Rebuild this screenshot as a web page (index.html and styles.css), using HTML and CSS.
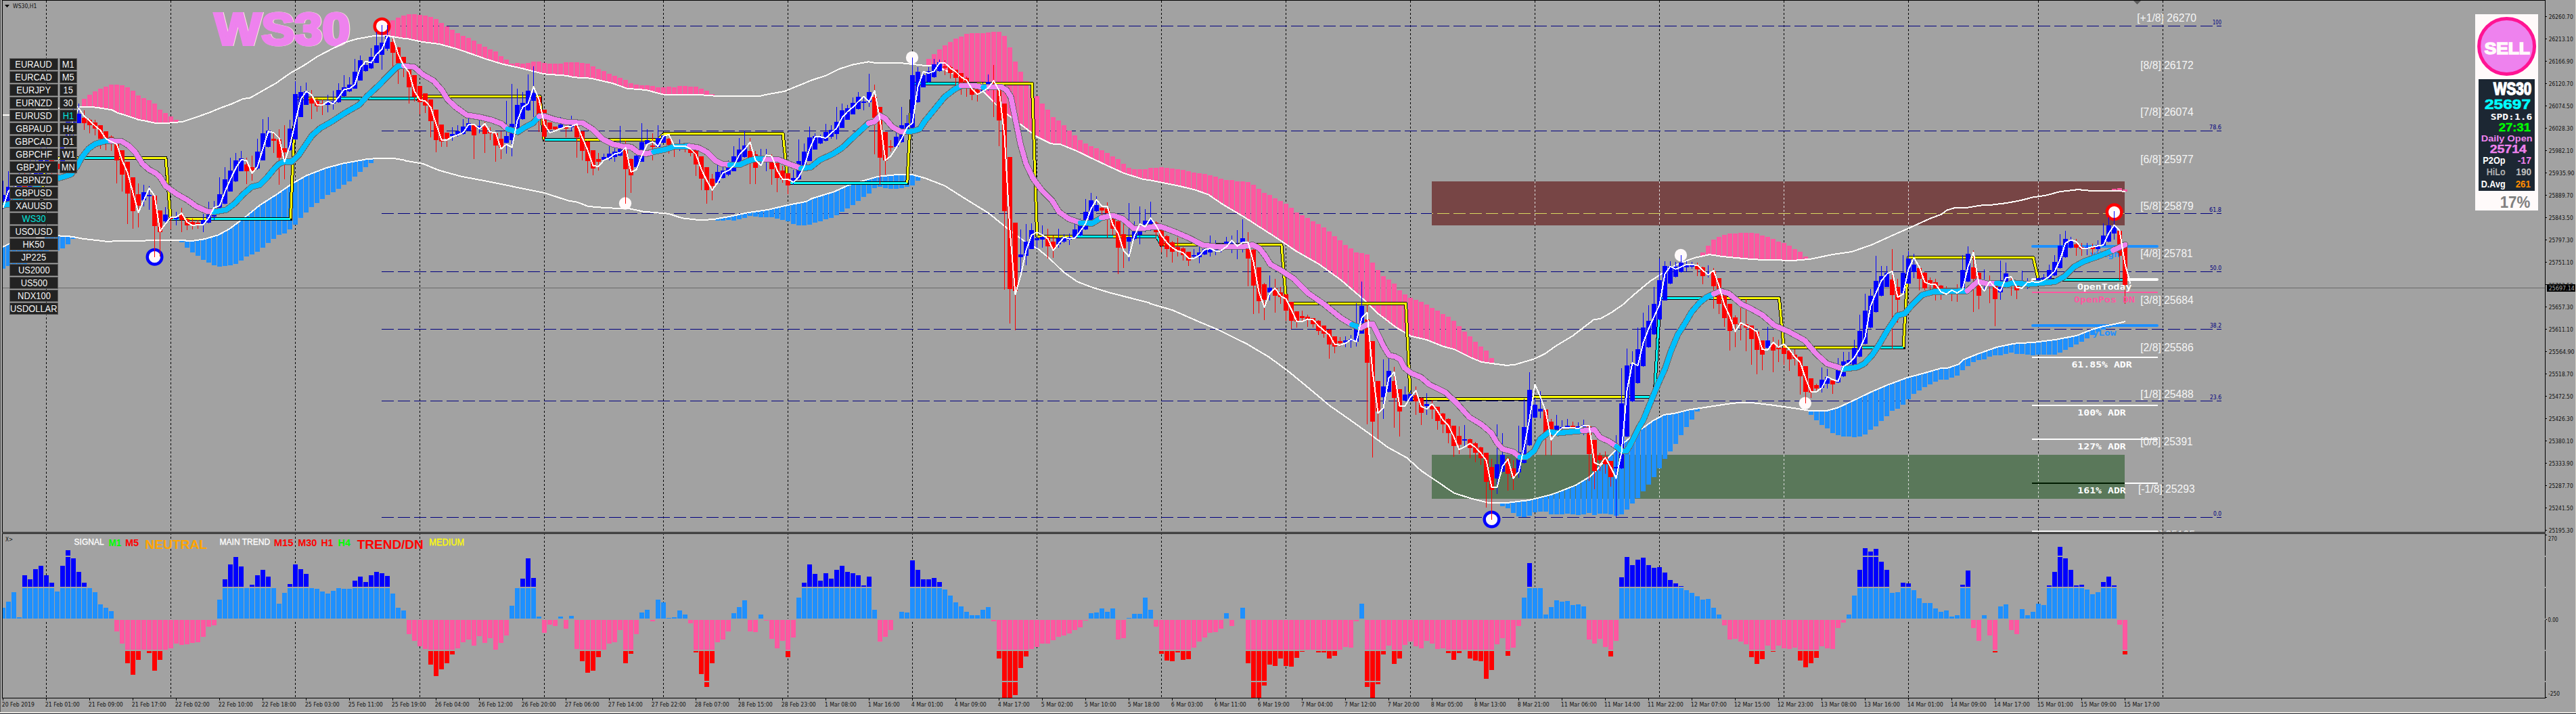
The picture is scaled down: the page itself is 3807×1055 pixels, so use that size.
FILE: index.html
```html
<!DOCTYPE html>
<html lang="en">
<head>
<meta charset="utf-8">
<title>WS30,H1</title>
<link rel="stylesheet" href="styles.css">
</head>
<body>
<main class="terminal">
  <svg class="chart" id="chart" width="3807" height="1055" viewBox="0 0 3807 1055"></svg>
  <nav class="switcher">
    <div class="switcher-col symbols" id="symbols"></div>
    <div class="switcher-col frames" id="frames"></div>
  </nav>
</main>
<script src="chart.js"></script>
</body>
</html>
```
FILE: styles.css
```css
body { margin: 0; background: #a2a2a2; font-family: "Liberation Sans", sans-serif; }
.terminal { position: relative; width: 3807px; height: 1055px; overflow: hidden; background: #a2a2a2; }
.chart { display: block; }
.switcher { position: absolute; left: 14px; top: 86px; display: flex; gap: 2px; align-items: flex-start; }
.switcher-col { display: flex; flex-direction: column; gap: 1px; }
.key { box-sizing: border-box; height: 18px; border: 1px solid #5c5c5c; background: #222; color: #f4f4f4; font-size: 14px; line-height: 17px; display: flex; justify-content: center; white-space: nowrap; }
.key span { transform: scaleX(.92); }
.symbols .key { width: 72px; }
.frames .key { width: 26px; }
.key.on { color: #00e5dc; }

.crisp { shape-rendering: crispEdges; }
.up { fill: #00f; }
.down { fill: #f00; }
.pink { fill: #ff57a0; }
.sky { fill: #1e90ff; }
.level { fill: #a2a2a2; }
.line { fill: none; stroke-linejoin: round; }
.band { stroke: #fffdfa; stroke-width: 2; }
.fast { stroke: #fff; stroke-width: 2; }
.ma-edge { stroke: #6b6b6b; stroke-width: 9.5; stroke-linecap: round; }
.ma { stroke-width: 7.4; stroke-linecap: round; }
.day-edge { stroke: #000; stroke-width: 5; stroke-linecap: square; }
.day { stroke-width: 3; }
.s-blue { stroke: #00bfff; }
.s-pink { stroke: #ee82ee; }
.s-yellow { stroke: #ff0; }
.s-cyan { stroke: #0ff; }
.grid { stroke: #000; stroke-dasharray: 3 3; }
.grid-light { stroke: #ddd; stroke-dasharray: 3 3; }
.fib { stroke: #000080; stroke-dasharray: 18 6; }
.fib-zone { stroke: #d8d860; stroke-dasharray: 18 6; }
.mono { font-family: "DejaVu Sans Mono", monospace; font-weight: bold; }
.sans { font-family: "Liberation Sans", sans-serif; }
.bold { font-weight: bold; }
.cond { font-family: "DejaVu Sans Condensed", "DejaVu Sans", sans-serif; }
```
FILE: chart.js
```javascript
const svg = document.getElementById('chart');
const NS = 'http://www.w3.org/2000/svg';
function el(name, attrs, text) {
  const n = document.createElementNS(NS, name);
  for (const k in attrs) n.setAttribute(k, attrs[k]);
  if (text !== undefined) n.textContent = text;
  svg.appendChild(n);
  return n;
}
const rect = (x, y, w, h, cls, fill) => el('rect', Object.assign({ x, y, width: w, height: h, class: 'crisp ' + (cls || '') }, fill ? { fill } : {}));
const seg = (x1, y1, x2, y2, cls, stroke, w) => el('line', Object.assign({ x1, y1, x2, y2, class: 'crisp ' + cls }, stroke ? { stroke, 'stroke-width': w || 1 } : {}));
// text fitted between x1 and x2 on a baseline
const txt = (s, x1, x2, y, size, fill, cls, extra) => el('text', Object.assign({ x: x1, y, style: 'font-size:' + size + 'px', fill, textLength: (x2 - x1).toFixed(1), lengthAdjust: 'spacingAndGlyphs', class: cls || 'sans' }, extra || {}), s);
const barX = i => 4.5 + 8 * i;

// Chart sections: origin x, origin y, units per pixel in x and y
const S = { A: [0, 0, 2.45, 3], B: [600, 0, 2.45, 3], C: [1200, 0, 2.45, 3], D: [1700, 240, 2.45, 2.851], E: [2300, 240, 2.45, 2.851], F: [2880, 0, 2.8, 1.96] };
const toX = (s, x) => S[s][0] + x / S[s][2];
const toY = (s, y) => S[s][1] + y / S[s][3];
function pts(spec) {
  const out = [];
  for (const [s, list] of spec) for (const p of list.trim().split(/\s+/)) {
    const [x, y] = p.split(',').map(Number);
    out.push([toX(s, x), toY(s, y)]);
  }
  return out;
}
const poly = (p, cls) => el('polyline', { points: p.map(q => q[0].toFixed(1) + ',' + q[1].toFixed(1)).join(' '), class: 'line ' + cls });

const upper = pts([
 ['A', '0,510 35,510 145,484 290,473 330,473 370,480 405,487 425,500 465,515 500,530 530,537 560,545 610,545 660,540 710,520 760,498 800,478 840,460 880,438 905,434 950,403 1000,368 1050,325 1100,290 1150,250 1200,218 1250,188 1290,173 1350,160 1410,160 1465,171'],
 ['B', '0,170 60,186 120,195 180,215 240,240 290,262 350,284 420,303 500,328 580,335 610,343 670,347 750,370 800,392 870,399 935,420 1060,420 1130,426 1280,426 1310,418 1370,405 1450,365'],
 ['C', '0,355 50,335 100,305 150,286 205,274 230,279 320,279 410,291 440,291 475,308 520,330 590,385 625,410 665,462 710,510 760,555 810,603 865,637 900,640 960,670 1010,700 1080,740 1130,768 1200,795'],
 ['D', '0,75 100,98 160,115 210,135 260,175 340,230 440,305 530,375 610,428 690,495 770,575 825,637 890,695 945,732 1000,747 1060,775 1100,787 1160,822 1200,841 1290,855 1320,852 1390,828 1430,805 1460,780'],
 ['E', '0,772 60,730 135,663 160,658 200,632 240,600 280,558 340,500 400,455 440,428 500,402 555,388 600,396 680,405 740,410 860,413 920,407 1000,388 1070,376 1140,348 1210,311 1280,275 1350,238 1395,218 1415,200'],
 ['F', '0,607 30,601 80,601 130,595 180,593 240,588 300,580 350,571 400,566 460,555 535,549 580,552 660,552 730,554']]);
const lower = pts([
 ['A', '0,1100 35,1080 145,1054 212,1045 260,1049 300,1058 385,1070 500,1067 600,1065 700,1067 740,1060 790,1042 830,1015 890,960 940,910 1000,863 1060,812 1110,778 1180,745 1240,725 1330,705 1380,701 1430,703 1465,710'],
 ['B', '0,713 60,725 120,755 200,782 300,805 400,830 500,855 590,890 620,896 660,915 730,922 810,925 860,938 950,947 1000,967 1060,975 1110,973 1170,960 1240,942 1310,930 1380,910 1450,893'],
 ['C', '0,880 80,850 130,822 180,803 240,782 310,774 365,775 410,790 480,823 560,885 640,945 710,1015 770,1070 820,1105 860,1145 910,1205 960,1248 1010,1272 1080,1298 1150,1320 1220,1342'],
 ['D', '0,595 80,622 170,668 250,707 350,765 430,820 500,880 570,947 650,1025 720,1082 790,1140 860,1200 930,1245 980,1298 1040,1345 1100,1393 1160,1415 1220,1433 1290,1434 1370,1423 1450,1400'],
 ['E', '0,1392 70,1360 120,1325 160,1278 200,1230 240,1185 300,1130 350,1088 390,1063 430,1057 480,1042 560,1028 640,1014 700,1011 780,1022 870,1037 910,1045 980,1046 1020,1033 1090,995 1140,967 1200,937 1270,907 1340,885 1390,868 1415,866'],
 ['F', '0,1065 40,1055 60,1042 120,1025 200,1005 270,995 360,991 440,984 530,972 590,955 640,945 690,938 730,931']]);
function at(line, x) {
  for (let k = 1; k < line.length; k++) if (line[k][0] >= x) {
    const a = line[k - 1], b = line[k];
    return a[1] + (b[1] - a[1]) * (x - a[0]) / (b[0] - a[0] || 1);
  }
  return line[line.length - 1][1];
}
const pinkTips = [
 ['A', 15, '438 421 405 393 384 375 375 378 387 402 423 434 444 459 486 501 516 531'],
 ['A', 71, '130 90 78 68'],
 ['B', 75, '63 63 66 69 75 84 101 117 132 147 158 168 180 195 207 219 228 249 264 282 279 282 279 273 273 279 282 282 282 276 276 276 279 282 294 306 315 327 336 345 354 369 375 378 378 381 387 387 384 387 381 381 384 384 393 402 417'],
 ['C', 170, '287 261 240 219 201 186 171 162 150 147 147 147 144 141 141 159 210 273 318 360 392 426 459 486 519 534 555 579 600 621 636 648 657 666 678 693 705 726 744 750 750 750 744 744 741 744 747 750 753 759 765 768 771 777 783'],
 ['D', 225, '68 74 74 80 80 83 94 111 128 137 151 163 174 191 211 222 234 248 259 274 291 311 328 348 362 379 382 388 422 453 479 493 510 539 556 570 579 587 599 613 624 639 650 667 690 713 733 755 775 793 824 847'],
 ['E', 314, '379 351 325 314 305 299 299 296 296 296 299 308 314 322 334 339 351 365 376 396'],
 ['F', 390, '547 545 549']];
const skyTips = [
 ['A', 0, '1190 1178 1172 1170 1168 1150 1140 1130 1120 1112 1108 1101 1083 1058'],
 ['A', 33, '1076 1098 1118 1133 1152 1166 1175 1182 1179 1176 1170 1155 1137 1128 1116 1098 1077 1059 1041 1035 1017 996 966 942 918 900 882 864 852 837 819 804 783 762 741 723'],
 ['B', 132, '977 977 977 977 972 968 957 960 963 963 963 968 975 981 993 999 999 996 987'],
 ['C', 151, '981 972 966 954 939 924 909 891 873 858 834 828 834 837 837 834 828 822 801'],
 ['D', 277, '1447 1457 1477 1491 1494 1488 1474 1471 1471 1482 1482 1482 1480 1482 1485'],
 ['E', 292, '1482 1477 1485 1480 1480 1482 1488 1482 1463 1437 1414 1386 1357 1326 1291 1249 1217 1186 1149 1115 1083 1049'],
 ['E', 334, '1061 1086 1106 1120 1138 1149 1152 1155 1157 1155 1146 1126 1112 1089 1069 1046 1038 1021 998 975 961 947 935 924 915 915'],
 ['F', 360, '1094 1088 1074 1060 1047 1043 1039 1033 1029 1028 1025 1023 1025 1025 1028 1028 1028 1028 1028 1027 1021 1013 1004 998 990 980 970 962 955 948']];

// Candles: u/d, then high, body top, body bottom, low
const candles = [
 ['A', 0, 'u800,863,925,928 u760,828,895,900 u800,830,880,890 u760,790,860,880 d740,800,850,870 u700,770,840,870 u690,740,800,820 u650,710,780,800 u640,690,750,790 d660,700,740,780 d690,725,750,790 u600,650,740,750 u500,530,640,650 u480,510,545,600 u460,503,545,545 d490,521,545,575 d525,530,555,590 d530,542,570,600 d555,555,615,660 d582,582,620,665 d600,606,638,670 d640,640,710,812 d666,666,773,850 d717,717,857,992 d786,786,935,1013 d812,860,912,1007 u820,852,888,915 u825,864,868,930 d868,868,1001,1140 d933,933,1028,1138 u918,950,980,990 d958,966,972,1018 u940,962,972,998 d921,950,976,1028 d965,972,998,1020 d970,984,998,1018 d975,986,992,1015 u948,976,992,1028 u895,940,986,990 u892,945,960,974 u787,860,920,920 u740,796,902,905 u700,756,848,850 u678,711,804,806 u668,702,758,760 d700,729,758,815 d690,741,756,802 u615,672,748,752 u528,592,710,712 u520,580,652,655 d592,614,624,678 d573,618,698,818 d556,657,674,795 u530,570,665,668 u360,418,617,620 u380,408,518,520 u366,405,464,466 d400,434,459,527 d434,447,472,494 d440,458,465,510 u420,454,464,497 u402,450,460,486 u368,399,452,455 u333,387,425,430 u342,376,406,408 u262,318,392,394 u245,267,356,358 u270,288,315,318 u212,252,303,305 u142,201,278,280 u112,189,243,308 u112,158,215,225 d165,186,233,298 d208,210,278,372 d252,252,305,342'],
 ['B', 75, 'd280,305,386,458 d333,333,430,450 d381,381,453,506 d414,414,468,500 d441,441,537,608 d486,486,620,674 d552,552,627,650 d588,588,615,650 u565,594,603,624 u555,583,600,605 u529,561,594,596 u524,545,580,582 d552,555,599,705 u533,558,569,592 d540,560,594,678 d565,585,592,622 d585,590,644,716 d582,615,654,705 u448,603,632,680 u372,549,620,692 u394,465,575,577 u408,457,528,530 u330,402,490,492 u294,410,447,518 d430,430,510,584 d486,486,605,628 d542,543,572,577 d560,561,572,575 u520,551,567,570 d555,560,570,608 u514,555,565,580 d550,553,609,698 d580,582,668,712 d624,626,713,768 d666,666,747,776 d678,705,717,755 u680,697,708,712 u648,681,705,710 u645,672,695,716 u558,660,690,692 d625,660,749,902 d702,705,776,855 u670,690,740,742 u546,630,716,718 u573,621,640,645 d592,645,651,710 u556,612,650,652 u598,600,632,634 d612,615,642,680 d640,648,660,695 u618,652,655,670 d645,658,664,676 d650,660,678,692 d660,666,728,780 d693,693,792,842 d741,741,842,902 d771,792,824,888 u732,762,810,812 u738,756,789,792 u712,740,774,780 u648,693,758,760 u612,663,718,722 u580,645,696,698 d613,669,702,815 d670,684,743,815 u660,700,704,730 u660,695,710,758 d684,692,749,820 d722,722,788,851 d735,756,794,810 d768,768,821,860 u752,789,804,820 u618,714,794,797 u636,672,740,742 u560,609,713,715 u590,603,662,664'],
 ['C', 151, 'u598,606,635,638 u549,585,624,626 u555,576,605,615 u474,540,594,618 u459,489,566,568 u465,480,530,532 u432,456,506,508 u408,429,482,485 u428,450,456,488 u327,408,453,474 d375,429,521,684 d474,474,698,818 d585,585,710,773 d620,648,654,672 u560,606,650,652 u474,555,630,632 u510,546,572,575 u254,333,566,568 u297,318,453,455 u318,333,386,388 u297,315,363,365 u262,285,342,344 u264,276,315,318 d267,293,300,333 d290,297,323,348 d309,309,345,380 d324,324,370,420 d340,346,375,430 d370,380,420,444 d385,390,418,450 u366,385,405,408 u330,363,390,402 d288,370,380,518 d395,396,533,648 d459,459,935,1283 d696,696,1280,1433 d987,987,1290,1463 u1018,1128,1140,1213 u994,1070,1133,1175 u990,1020,1103,1105 u1040,1055,1064,1100 u1000,1050,1062,1098 d1015,1050,1091,1145 d1043,1070,1100,1143 u1015,1055,1084,1098 u1038,1050,1072,1076 u1034,1050,1062,1085 u988,1018,1055,1060 u970,1000,1044,1046 u882,939,1018,1020 u855,888,975,978 u870,909,936,938 d912,921,933,958 d898,924,945,1052 d960,965,1014,1040 d975,980,1098,1214 d990,1038,1102,1188 u900,1050,1070,1158 u980,1024,1060,1064 u915,1020,1040,1083 u927,978,1010,1030 u894,975,1000,1022 d980,988,1030,1060 d1015,1020,1088,1120 d1040,1047,1104,1140 d1068,1074,1115,1163 d1052,1095,1110,1138 d1095,1100,1132,1155 d1115,1116,1155,1178 u1104,1131,1137,1150 u1090,1119,1140,1166 u1095,1105,1128,1132 u1044,1100,1118,1138 u1066,1098,1110,1132'],
 ['D', 225, 'u340,365,370,378 u314,334,345,347 u308,340,348,382 u285,345,350,408 u239,319,335,378 d294,345,405,522 d366,368,518,639 d442,442,584,635 d508,514,580,664 u476,527,547,582 d490,530,561,632 d524,547,567,595 d556,556,624,668 d587,587,667,700 d626,627,669,697 d623,647,655,667 d642,650,662,693 d655,657,681,697 d665,667,710,727 d686,687,721,737 d702,703,767,826 d733,733,775,803 d735,752,760,775 u733,749,758,778 u728,743,752,780 u593,690,755,775 u502,603,720,722 d600,661,843,1103 d752,753,1091,1243 d921,921,1050,1165 u830,944,989,1080 u828,878,966,968 d861,921,992,1118 d955,955,1049,1155 u944,978,1004,1006 u960,975,1003,1005 d944,982,1006,1063 d990,992,1055,1105 u972,1018,1026,1063 d1000,1020,1041,1080 d1028,1029,1088,1125 d1056,1058,1103,1140 d1078,1080,1140,1183 d1108,1109,1195,1240 d1112,1152,1189,1228 u1106,1166,1171,1200 d1163,1166,1203,1245 d1177,1183,1223,1263 d1198,1200,1246,1274 d1223,1223,1346,1454 d1249,1283,1380,1504 u1103,1272,1331,1397 u1140,1232,1303,1305 d1240,1250,1311,1383 d1255,1289,1325,1380 u1109,1220,1306,1328 u995,1115,1266,1268 u884,958,1192,1194 u990,1021,1075,1077 u964,1038,1049,1078 d1040,1041,1137,1234 d1080,1092,1140,1234 u1063,1109,1128,1130 u1085,1115,1120,1122 u1080,1109,1118,1120 d1092,1110,1118,1120 u1095,1113,1118,1120'],
 ['E', 292, 'u1083,1105,1115,1150 d1108,1112,1229,1343 d1169,1169,1300,1377 d1223,1234,1254,1300 d1217,1240,1271,1311 d1257,1257,1326,1366 u1149,1283,1290,1494 u867,1015,1289,1291 u784,855,1155,1157 u795,850,1006,1008 u696,787,929,931 u633,696,858,860 u602,667,778,780 u525,596,724,726 u405,496,661,663 u416,436,581,583 u416,440,510,512 u420,438,482,484 u390,422,462,464 u416,432,443,460 u418,431,440,447 d422,434,450,479 d440,442,479,513 u433,465,470,485 d445,460,522,615 d488,488,596,640 d555,556,656,692 d596,596,710,793 d645,654,682,778 d613,678,685,750 d576,680,697,795 d686,687,744,852 d712,713,790,892 d750,750,809,875 u693,750,782,784 d736,765,793,884 d747,781,787,841 d770,781,807,853 d793,794,830,878 d787,810,828,855 d818,818,901,978 d858,858,966,1015 d909,909,969,992 d932,938,952,960 u864,915,949,969 u870,905,932,952 d912,918,935,975 u824,875,927,929 u798,838,901,903 u798,832,850,852 u747,781,852,854 u641,710,818,820 u553,624,764,766 u533,562,696,698 u393,499,630,632 u436,479,563,565 u436,465,524,526 d365,493,559,787 d490,525,579,675 u390,465,550,552 u373,405,510,512 u385,430,462,488 d430,445,490,538 d463,465,529,538 d485,496,512,535 d490,505,535,582 d515,519,559,578 d522,540,548,560 d530,536,544,585 d513,540,552,587 u390,453,545,547 u354,385,502,504 d372,442,490,630 d462,465,562,619 u450,505,510,540'],
 ['F', 367, 'd798,825,832,878 d815,822,867,944 u755,811,846,868 u760,792,815,818 d805,818,825,857 d825,830,840,866 u784,820,825,834 u806,818,822,837 d812,815,818,822 u803,806,812,818 u794,803,810,812 u766,782,807,810 u739,759,797,799 u678,711,777,779 u668,692,745,747 u686,696,718,720 d692,708,717,741 d704,715,722,741 u704,716,720,738 d705,715,722,736 u696,710,722,727 u647,682,712,714 u630,653,700,702 u612,655,676,694 d666,668,741,811 d703,710,826,880']];
const fast = [
 ['A', 0, '920 845 840 800 820 780 760 730 700 700 710 690 600 530 480 515 535 558 578 615 628 640 710 765 855 942 888 835 868 1025 992 962 962 945 985 1000 996 996 965 920 912 850 795 745 708 712 768 738 660 583 588 612 718 645 540 440 405 420 464 466 450 460 430 397 393 374 300 272 278 240 218 160 162 240 290'],
 ['B', 75, '320 405 442 448 475 550 621 620 607 598 588 553 552 570 548 586 588 660 640 653 535 475 460 385 440 552 588 580 570 561 560 550 610 665 735 738 710 700 682 678 654 763 752 690 640 628 649 603 596 648 649 648 660 684 750 800 842 810 766 756 735 687 662 630 710 733 688 692 755 794 795 807 785 738 660 606'],
 ['C', 151, '607 612 590 568 522 495 475 450 428 452 402 530 710 692 655 615 565 545 385 318 324 316 278 279 302 318 342 355 395 418 405 390 358 400 600 1020 1305 1220 1110 1042 1030 1042 1058 1110 1080 1052 1058 1055 1025 990 925 885 914 916 995 1035 1110 1138 1045 993 1005 967 1000 1045 1075 1098 1112 1120 1145 1145 1132 1106 1102 1112'],
 ['D', 225, '372 355 328 352 337 337 420 545 610 552 530 562 575 620 670 670 660 663 688 708 726 767 769 762 745 755 655 632 880 1056 1035 908 883 1026 1026 988 962 1028 1038 1018 1048 1085 1108 1155 1210 1198 1184 1200 1225 1255 1368 1368 1280 1250 1330 1303 1200 1080 935 988 1050 1168 1140 1118 1119 1117 1122'],
 ['E', 292, '1108 1109 1265 1275 1243 1285 1330 1220 960 845 856 760 700 650 600 470 438 450 440 430 431 433 455 473 455 520 600 650 712 676 687 698 713 788 789 758 778 765 788 820 843 910 967 966 950 903 915 922 860 845 822 785 735 605 550 498 470 458 568 555 450 402 440 505 512 514 545 555 538 550 535 440 378 510 542'],
 ['F', 367, '815 832 843 804 802 832 835 817 816 818 811 801 786 752 704 695 700 719 719 715 712 710 675 652 668 765 822']];
const ma = [
 ['s-blue', [['A', '0,912 35,905 100,860 150,810 212,790 235,782 258,772 280,735 295,700 320,660 345,638 375,627 400,624']]],
 ['s-pink', [['A', '400,624 440,626 465,645 490,675 515,725 540,752 565,768 580,785 600,825 640,860 680,888 710,915 750,937 775,940']]],
 ['s-blue', [['A', '775,940 795,935 820,930 850,902 880,862 912,828 940,820 965,790 990,752 1010,727 1030,716 1055,718 1080,690 1105,645 1130,600 1160,568 1200,540 1250,500 1300,465 1330,425 1370,380 1410,330 1440,294 1462,292']]],
 ['s-pink', [['A', '1462,292'], ['B', '30,297 60,330 100,358 130,400 150,440 180,475 220,510 270,520 310,532 345,548 368,572']]],
 ['s-blue', [['B', '368,572 405,585 430,565 460,545 482,516']]],
 ['s-pink', [['B', '482,516 500,514 540,530 580,541 640,545 675,572 710,615 750,640 790,650 815,652 840,675 870,682 897,673']]],
 ['s-blue', [['B', '897,673 940,662 970,650 1025,648']]],
 ['s-pink', [['B', '1025,648 1060,655 1090,675 1120,712 1145,727 1172,730']]],
 ['s-blue', [['B', '1172,730 1210,730 1240,713 1270,703 1300,706']]],
 ['s-pink', [['B', '1300,706 1345,706 1390,728 1430,746']]],
 ['s-blue', [['B', '1430,746 1465,742'], ['C', '30,708 75,683 110,655 150,608 180,574 205,546']]],
 ['s-pink', [['C', '205,546 225,540 248,513 265,525 290,562 320,583 348,584']]],
 ['s-blue', [['C', '348,584 370,580 390,572 410,535 440,490 480,430 515,397 540,380']]],
 ['s-pink', [['C', '540,380 590,380 620,387']]],
 ['s-blue', [['C', '620,387 640,385']]],
 ['s-pink', [['C', '640,385 685,385 705,400 720,430 735,520 755,640 775,725 800,790 830,840 870,890 895,940 930,970 972,988']]],
 ['s-blue', [['C', '972,988 1015,990 1048,965']]],
 ['s-pink', [['C', '1048,965 1090,955 1125,970 1165,1013 1200,1012'], ['D', '10,271 40,271 90,293 140,318 190,348 250,356 340,354 370,347 395,362 415,392 435,430 470,452 520,490 570,550 630,598 690,655 730,683']]],
 ['s-blue', [['D', '730,683 762,697']]],
 ['s-pink', [['D', '762,697 785,683 805,680 820,715 845,775 865,813 885,817 905,830 920,865 945,888 980,905 1010,935 1070,970 1110,1015 1155,1073 1200,1105 1235,1140 1255,1180 1275,1207 1315,1220 1338,1242']]],
 ['s-blue', [['D', '1338,1242 1362,1242 1390,1215 1412,1165 1445,1135 1475,1140'], ['E', '40,1136 95,1130']]],
 ['s-pink', [['E', '95,1130 138,1126 158,1158 190,1175 218,1197']]],
 ['s-blue', [['E', '218,1197 238,1216 255,1215 272,1180 300,1115 315,1085 345,1000 370,930 395,865 415,795 440,725 465,680 490,630 520,590 545,567 570,554']]],
 ['s-pink', [['E', '570,554 595,542 625,552 670,597 700,613 745,642 790,687 840,712 900,750 940,805 980,848 1040,870']]],
 ['s-blue', [['E', '1040,870 1090,863 1115,848 1145,810 1170,765 1200,705 1235,645 1262,637 1285,605 1325,558 1365,545 1430,543 1488,541']]],
 ['s-pink', [['E', '1488,541'], ['F', '120,815 160,822 198,820']]],
 ['s-blue', [['F', '198,820 240,825 265,819 330,823 380,820 440,816 480,800 520,772 560,757 620,742 680,725']]],
 ['s-pink', [['F', '680,725 710,715 730,709']]]];
const day = [
 ['s-yellow', [['A', '150,882 165,715 180,700 300,700']]], ['s-cyan', [['A', '300,700 420,700']]],
 ['s-yellow', [['A', '420,700 600,700 618,970']]], ['s-cyan', [['A', '618,970 660,970']]],
 ['s-yellow', [['A', '660,970 765,970']]], ['s-cyan', [['A', '765,970 1052,970']]],
 ['s-yellow', [['A', '1052,970 1070,436 1232,436']]], ['s-cyan', [['A', '1232,436 1470,436'], ['B', '40,436']]],
 ['s-yellow', [['B', '40,436 52,427 485,427 500,619']]], ['s-cyan', [['B', '500,619 618,619']]],
 ['s-yellow', [['B', '618,619 912,619 935,593 1365,593 1383,811']]], ['s-cyan', [['B', '1383,811'], ['C', '345,811']]],
 ['s-yellow', [['C', '345,811 363,370']]], ['s-cyan', [['C', '363,370 590,370']]],
 ['s-yellow', [['C', '590,370 797,370 815,1048 945,1048']]], ['s-cyan', [['C', '945,1048 1090,1048']]],
 ['s-yellow', [['C', '1090,1048 1175,1048']]], ['s-cyan', [['C', '1175,1048 1248,1048 1265,1084']]],
 ['s-yellow', [['C', '1265,1084'], ['D', '475,347 493,594 925,594 942,996 1373,996 1393,988'], ['E', '270,988']]],
 ['s-cyan', [['E', '270,988 355,988 376,572 570,572']]], ['s-yellow', [['E', '570,572 807,572 824,779 1110,779']]],
 ['s-cyan', [['E', '1110,779 1257,779']]], ['s-yellow', [['E', '1257,779 1275,400'], ['F', '350,746 371,810']]],
 ['s-cyan', [['F', '371,810 730,810']]]];
// Oscillator bar tips, three units per pixel below y=780
const osc = ('354 327 285 396 210 228 183 168 210 243 282 168 99 135 195 243 267 285 339 354 369 459 513 600 651 585 540 555 633 585 540 534 513 519 516 510 507 483 438 432 318 228 162 129 171 265 252 210 186 216 265 336 288 249 162 183 204 266 270 282 291 279 267 270 270 234 216 240 210 195 201 213 291 354 366 471 501 525 537 606 657 627 600 561 534 507 495 522 480 510 489 540 510 477 345 266 225 135 222 393 465 429 435 393 447 390 537 591 642 633 573 540 513 507 453 600 558 471 375 363 ' +
 '414 318 330 399 396 366 384 423 552 648 705 600 507 495 459 378 351 321 459 462 384 411 492 534 501 573 486 309 243 162 204 234 201 225 186 168 195 201 210 255 216 363 504 483 453 405 372 375 144 186 228 228 222 240 273 300 330 348 372 387 387 363 351 414 579 753 753 741 621 570 537 528 513 513 498 483 477 468 453 441 411 378 375 357 372 357 495 489 399 381 381 309 363 438 558 588 591 552 585 582 531 504 486 465 462 447 378 435 405 354 600 753 753 699 606 612 579 612 615 576 ' +
 '549 540 540 552 552 579 567 540 528 531 414 336 705 753 693 561 522 603 579 519 504 525 534 501 513 537 534 555 585 555 540 579 588 591 669 630 516 489 567 531 435 309 156 266 267 384 351 321 327 324 342 339 348 495 513 492 528 570 501 219 129 165 141 132 165 177 174 198 231 246 258 276 288 303 318 315 354 384 432 495 492 504 516 573 603 582 522 549 522 534 537 531 588 618 600 576 525 534 537 444 420 384 300 186 90 105 93 150 186 288 285 243 246 276 312 333 333 357 372 366 ' +
 '393 387 252 189 444 501 387 477 552 348 339 453 471 360 387 372 336 342 255 195 84 135 186 255 252 273 294 285 240 216 255 429 561').split(' ').map(Number);

// Zones, grid and Fibonacci levels
rect(2116, 268, 1024, 65, '', '#774545');
rect(2116, 672, 1024, 65, '', '#5a785a');
const grid = [68, 252, 436, 620, 804, 980, 1164, 1348, 1532, 1716, 1900, 2084, 2268, 2452, 2636, 2820, 3012, 3196];
// lower edge of the price window cuts the last Murrey label
txt('[-2/8] 25195', 3160, 3244, 796, 16, '#f5f5f5');
rect(3150, 787, 110, 16, 'level');
for (const x of grid) {
  seg(x + .5, 1, x + .5, 1031, 'grid');
  if (x > 2116 && x < 3140) for (const [a, b, c] of [[268, 333, '#774545'], [672, 737, '#5a785a']]) {
    rect(x, a, 1, b - a, '', c);
    seg(x + .5, a, x + .5, b, 'grid-light');
  }
}
seg(0, 425.5, 3762, 425.5, '', '#696969');
for (const y of [38, 193, 315, 401, 486, 592, 764]) {
  seg(564, y + .5, 3283, y + .5, 'fib');
  if (y === 315) {
    rect(2116, y, 1024, 1, '', '#774545');
    el('line', { x1: 2116, x2: 3140, y1: 315.5, y2: 315.5, class: 'crisp fib-zone', 'stroke-dashoffset': (2116 - 564) % 24 });
  }
}

// Session levels on the right
const L = (y, w, c) => rect(3003, y, 186, w, '', c);
const thick = (y, c) => el('line', { x1: 3004, x2: 3188, y1: y, y2: y, stroke: c, 'stroke-width': 4, 'stroke-linecap': 'round' });
thick(364, '#1e90ff'); thick(481, '#1e90ff');
L(431, 2, '#ff57a0'); L(527, 2, '#fff'); L(598, 2, '#fff'); L(648, 2, '#fff'); L(713, 2, '#fff'); L(784, 2, '#fff');
rect(3003, 713, 137, 2, '', '#001c00');
thick(413, '#fff');

// Large symbol caption
txt('WS30', 318, 518, 66, 66, '#fbeedc', 'sans bold', { stroke: '#fbeedc', 'stroke-width': 4 });
txt('WS30', 317, 517, 65.5, 66, '#ee82ee', 'sans bold', { stroke: '#ee82ee', 'stroke-width': 4 });

// Band histograms
for (const [sets, band, cls] of [[pinkTips, upper, 'pink'], [skyTips, lower, 'sky']])
  for (const [s, start, list] of sets) list.split(' ').forEach((v, k) => {
    const i = start + k, a = toY(s, +v), b = at(band, barX(i));
    rect(8 * i + 1, Math.round(Math.min(a, b)), 7, Math.max(1, Math.round(Math.abs(b - a))), cls);
  });
poly(upper, 'band crisp');
poly(lower, 'band crisp');
for (const [c, p] of day) poly(pts(p), 'day-edge crisp');
for (const [c, p] of day) poly(pts(p), 'day crisp ' + c);

// Swing markers sit under the wicks
for (const [x, y, c] of [[564.5, 38.7, '#f00'], [228.5, 379.7, '#00f'], [2204.5, 767.5, '#00f'], [3124.6, 313.3, '#f00'], [924, 300.5], [1348, 85], [2484, 377], [2667.8, 595.7]])
  el('circle', c ? { cx: x, cy: y, r: 10.8, fill: '#fffafa', stroke: c, 'stroke-width': 4.4 } : { cx: x, cy: y, r: 9.2, fill: '#fffafa' });

for (const [s, start, list] of candles) list.split(' ').forEach((c, k) => {
  const i = start + k, cls = c[0] === 'u' ? 'up' : 'down';
  const [h, t, b, l] = c.slice(1).split(',').map(v => Math.round(toY(s, +v)));
  rect(8 * i + 4, h, 1, Math.max(1, l - h), cls);
  rect(8 * i + 1, t, 7, Math.max(2, b - t), cls);
});

// Level captions
const cap = (s, a, b, y, c) => txt(s, 2880 + a / 2.8, 2880 + b / 2.8, y, 12.8, c, 'mono');
cap('yHigh', 583, 708, 379.5, '#1e90ff');
cap('yLow', 595, 693, 495.5, '#1e90ff');
for (const [c, p] of ma) poly(pts(p), 'ma-edge crisp');
for (const [c, p] of ma) poly(pts(p), 'ma crisp ' + c);
const fp = [];
for (const [s, start, list] of fast) list.split(' ').forEach((v, k) => fp.push([barX(start + k), toY(s, +v)]));
poly(fp, 'fast crisp');
cap('OpenToday', 532, 757, 428, '#fff'); cap('OpenPos DN', 518, 770, 447, '#ff57a0');
cap('61.85% ADR', 508, 758, 542.5, '#fff'); cap('100% ADR', 533, 733, 613.5, '#fff');
cap('127% ADR', 533, 733, 663.5, '#fff'); cap('161% ADR', 533, 733, 728.5, '#fff');
[['[+1/8] 26270', 779, 1025, 32], ['[8/8] 26172', 793, 1013, 101.5], ['[7/8] 26074', 793, 1013, 171], ['[6/8] 25977', 793, 1013, 241], ['[5/8] 25879', 793, 1013, 310], ['[4/8] 25781', 793, 1010, 380], ['[3/8] 25684', 793, 1013, 449], ['[2/8] 25586', 793, 1013, 519], ['[1/8] 25488', 793, 1013, 588], ['[0/8] 25391', 793, 1010, 658], ['[-1/8] 25293', 784, 1018, 728]]
  .forEach(([s, a, b, y]) => txt(s, 2880 + a / 2.8, 2880 + b / 2.8, y, 16.5, '#f5f5f5'));
[['100', 13, 36], ['78.6', 18, 191], ['61.8', 18, 313], ['50.0', 17, 398.5], ['38.2', 17, 484], ['23.6', 17, 590], ['0.0', 12, 762]]
  .forEach(([s, w, y]) => txt(s, 3283 - w, 3283, y, 9.3, '#000080', 'cond'));

// Oscillator panel
osc.forEach((v, i) => {
  const y = Math.round(780 + v / 3), x = 8 * i + 1;
  if (y < 914) {
    const m = Math.max(y, 868);
    rect(x, m, 7, 914 - m, 'sky');
    if (y < 867) rect(x, y, 7, 868 - y, 'up');
  } else if (y > 915) {
    const m = Math.min(y, 961);
    rect(x, 916, 7, m - 916, 'pink');
    if (y > 962) rect(x, 961, 7, y - 961, 'down');
  }
});

// Frames and axes
rect(0, 0, 3, 1052, 'level'); rect(0, 0, 1, 1052, '', '#5a5a5a'); rect(3, 0, 1, 1031, '', '#000');
rect(3, 0, 3759, 1, '', '#000');
rect(3761, 0, 1, 1032, '', '#000');
for (const y of [821, 867, 914, 960, 1006]) rect(4, y, 3759, 2, 'level');
rect(3, 786, 3759, 1, '', '#000'); rect(3, 787, 3759, 1, 'level'); rect(3, 788, 3759, 1, '', '#000');
rect(3, 1031, 3759, 1, '', '#000');
el('path', { d: 'M3153 1h11l-5.500 5.500z', fill: '#5a5a5a' });
for (let k = 0; k < 24; k++) {
  const y = 24.5 + 33 * k;
  rect(3762, Math.floor(y), 2, 1, '', '#000');
  const val = k === 0 ? '26260.70' : k === 12 ? '25703.50' : (k < 12 ? 26213.1 - 46.2 * (k - 1) : 25657.3 - 46.2 * (k - 13)).toFixed(2);
  txt(val, 3766.7, 3766.7 + (/^..(5|9).*\.90$/.test(val) ? 38 : 36), (k === 12 ? 425 : y + 3.2), 8.8, '#111', 'cond');
}
rect(3764, 420, 42, 11, '', '#000');
txt('25697.14', 3766.7, 3805, 428.6, 8.8, '#aaa', 'cond');
txt('270', 3766, 3779, 799, 9.500, '#111', 'cond');
txt('0.00', 3765.500, 3781, 919, 9.500, '#111', 'cond');
txt('-250', 3766, 3783, 1028, 9.500, '#111', 'cond');
rect(3762, 790, 2, 1, '', '#000'); rect(3762, 915, 2, 1, '', '#000'); rect(3762, 1030, 2, 1, '', '#000');

const dates = ['20 Feb 2019'];
[['21 Feb', '01 09 17'], ['22 Feb', '02 10 18'], ['25 Feb', '03 11 19'], ['26 Feb', '04 12 20'], ['27 Feb', '06 14 22'], ['28 Feb', '07 15 23'], ['1 Mar', '08 16'], ['4 Mar', '01 09 17'], ['5 Mar', '02 10 18'], ['6 Mar', '03 11 19'], ['7 Mar', '04 12 20'], ['8 Mar', '05 13 21'], ['11 Mar', '06 14 22'], ['12 Mar', '07 15 23'], ['13 Mar', '08 16'], ['14 Mar', '01 09 17'], ['15 Mar', '01 09 17']]
  .forEach(([d, h]) => h.split(' ').forEach(x => dates.push(d + ' ' + x + ':00')));
dates.forEach((d, k) => {
  rect(4 + 64 * k, 1032, 1, 3, '', '#000');
  const w = d === '20 Feb 2019' ? 48 : d.includes('Feb') ? 51 : d[1] === ' ' ? 47 : 53;
  txt(d, 2.8 + 64 * k, 2.8 + 64 * k + w, 1044, 9.500, '#111', 'cond');
});
rect(0, 1052, 3807, 1, '', '#d4d0c8'); rect(0, 1053, 3807, 1, '', '#fff'); rect(0, 1054, 3807, 1, '', '#15171c');
rect(3806, 0, 1, 1052, '', '#d4d0c8');

// Headings
el('path', { d: 'M7 7h7l-3.500 4z', fill: '#000' });
txt('WS30,H1', 19, 54.5, 12, 9.500, '#111', 'cond');
txt('X>', 8, 19, 800, 9, '#111', 'cond');
[['SIGNAL', 179, 251, 805, 12.5, '#fff', ''], ['M1', 262, 293, 806.5, 15, '#0f0', 'bold'], ['M5', 302, 335, 806.5, 15, '#f00', 'bold'], ['NEUTRAL', 350, 500, 811, 19, 'orange', 'bold'], ['MAIN TREND', 530, 652, 805, 12.5, '#fff', ''], ['M15', 661, 708, 806.5, 15, '#f00', 'bold'], ['M30', 719, 765, 806.5, 15, '#f00', 'bold'], ['H1', 775, 804, 806.5, 15, '#f00', 'bold'], ['H4', 816, 846, 806.5, 15, '#0f0', 'bold'], ['TREND/DN', 862, 1022, 811, 19, '#f00', 'bold'], ['MEDIUM', 1036, 1121, 806, 14, '#ff0', '']]
  .forEach(([s, a, b, y, z, c, w]) => txt(s, a / 1.6333, b / 1.6333, y, z, c, 'sans ' + w, w ? {} : { stroke: c, 'stroke-width': .3 }));

// Signal card
rect(3658, 21, 93, 290, '', '#fffafa');
el('circle', { cx: 3704.6, cy: 68.5, r: 41, fill: '#ee82ee', stroke: '#ff1493', 'stroke-width': 5 });
rect(3663, 117, 83, 165, '', '#1c2733');
const card = (s, a, b, y, z, c, cls, sw) => txt(s, 3600 + a / 3, 3600 + b / 3, y, z, c, cls || 'sans bold', sw ? { stroke: c, 'stroke-width': sw } : {});
card('SELL', 215, 417, 80, 24, '#fffafa', 0, 1.6);
card('WS30', 255, 424, 140, 25, '#fff', 0, 1.5);
card('25697', 216, 420, 160.500, 20, '#0ff', 0, .6);
card('SPD:1.6', 242, 427, 176.5, 13, '#fff', 'mono');
card('27:31', 278, 420, 194, 16, '#0f0', 0, .4);
card('Daily Open', 200, 428, 208.5, 13.5, '#ee82ee');
card('25714', 239, 402, 226, 17, '#ee82ee', 0, .4);
card('P2Op', 208, 308, 242, 14, '#fff');
card('-17', 362, 423, 242, 14, '#ee82ee');
card('HiLo', 224, 308, 259, 14, '#b0b0b0');
card('190', 355, 423, 259, 14, '#c0c0c0');
card('D.Avg', 200, 308, 276.5, 14, '#fff');
card('261', 353, 420, 276.5, 14, '#ff8c00');
card('17%', 284, 418, 307, 24, '#808080');

// Symbol and timeframe keys
function keys(id, names, on) {
  const box = document.getElementById(id);
  for (const n of names.split(' ')) {
    const d = document.createElement('div');
    d.className = 'key' + (n === on ? ' on' : '');
    const t = document.createElement('span');
    t.textContent = n;
    d.appendChild(t);
    box.appendChild(d);
  }
}
keys('symbols', 'EURAUD EURCAD EURJPY EURNZD EURUSD GBPAUD GBPCAD GBPCHF GBPJPY GBPNZD GBPUSD XAUUSD WS30 USOUSD HK50 JP225 US2000 US500 NDX100 USDOLLAR', 'WS30');
keys('frames', 'M1 M5 15 30 H1 H4 D1 W1 MN', 'H1');
```
